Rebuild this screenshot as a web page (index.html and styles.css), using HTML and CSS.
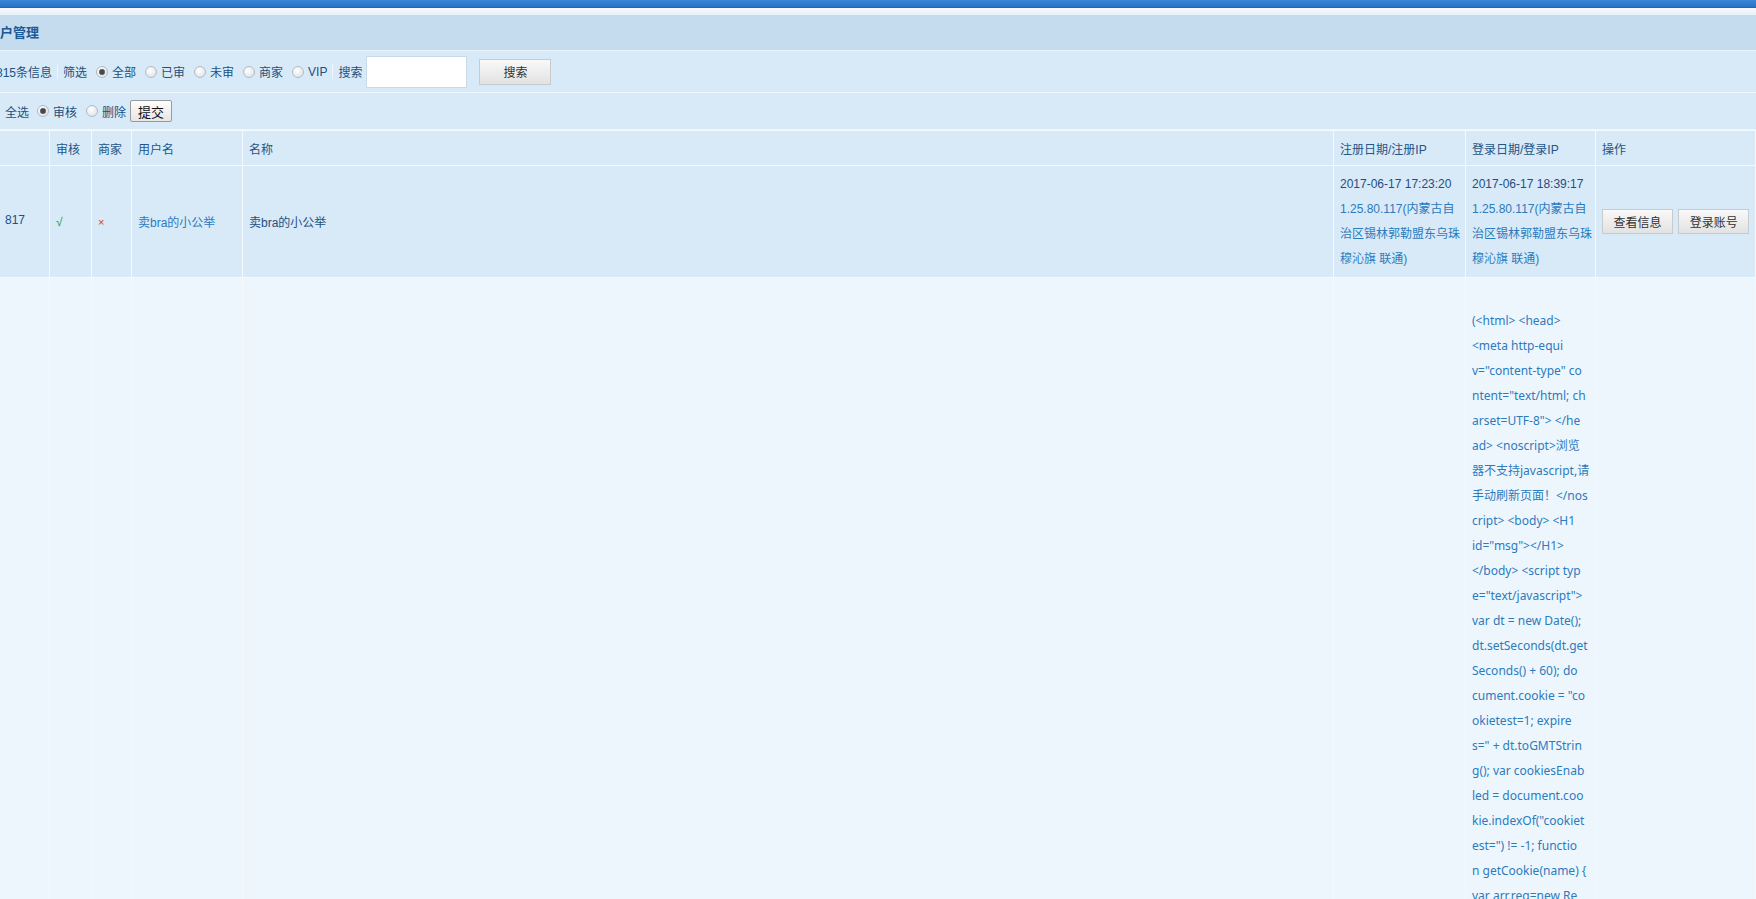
FILE: index.html
```html
<!DOCTYPE html>
<html lang="zh-CN">
<head>
  <meta charset="UTF-8">
  <title>用户管理</title>
  <link rel="stylesheet" href="styles.css">
</head>
<body>
  <div class="topbar"></div>
  <div class="strip"></div>

  <div class="page">
    <div class="title">用户管理</div>

    <div class="bar filter">
      <span>共815条信息</span>
      <span class="sep">筛选</span>
      <label class="opt"><input type="radio" name="f" checked>全部</label>
      <label class="opt"><input type="radio" name="f">已审</label>
      <label class="opt"><input type="radio" name="f">未审</label>
      <label class="opt"><input type="radio" name="f">商家</label>
      <label class="opt"><input type="radio" name="f">VIP</label>
      <span class="sep">搜索</span>
      <input type="text" class="search-box">
      <button class="btn btn-search">搜索</button>
    </div>

    <div class="bar actions">
      <label class="chk"><input type="checkbox">全选</label>
      <label class="opt first"><input type="radio" name="a" checked>审核</label>
      <label class="opt"><input type="radio" name="a">删除</label>
      <button class="btn-submit">提交</button>
    </div>

    <table class="list">
      <colgroup>
        <col style="width: 69px">
        <col style="width: 42px">
        <col style="width: 40px">
        <col style="width: 111px">
        <col>
        <col style="width: 132px">
        <col style="width: 130px">
        <col style="width: 160px">
      </colgroup>
      <thead>
        <tr>
          <th></th>
          <th>审核</th>
          <th>商家</th>
          <th>用户名</th>
          <th>名称</th>
          <th>注册日期/注册IP</th>
          <th>登录日期/登录IP</th>
          <th>操作</th>
        </tr>
      </thead>
      <tbody>
        <tr class="item">
          <td><label class="chk"><input type="checkbox">817</label></td>
          <td><span class="yes">√</span></td>
          <td><span class="no">×</span></td>
          <td><a href="#">卖bra的小公举</a></td>
          <td>卖bra的小公举</td>
          <td class="when">
            <span class="date">2017-06-17 17:23:20</span><br>
            <a href="#">1.25.80.117(内蒙古自<br>治区锡林郭勒盟东乌珠<br>穆沁旗 联通)</a>
          </td>
          <td class="when">
            <span class="date">2017-06-17 18:39:17</span><br>
            <a href="#">1.25.80.117(内蒙古自<br>治区锡林郭勒盟东乌珠<br>穆沁旗 联通)</a>
          </td>
          <td class="ops">
            <button class="btn">查看信息</button>
            <button class="btn">登录账号</button>
          </td>
        </tr>
        <tr class="item raw">
          <td></td>
          <td></td>
          <td></td>
          <td></td>
          <td></td>
          <td></td>
          <td class="dump"><a href="#">(&lt;html&gt; &lt;head&gt;<br>&lt;meta http-equi<br>v="content-type" co<br>ntent="text/html; ch<br>arset=UTF-8"&gt; &lt;/he<br>ad&gt; &lt;noscript&gt;浏览<br>器不支持javascript,请<br>手动刷新页面！&lt;/nos<br>cript&gt; &lt;body&gt; &lt;H1<br>id="msg"&gt;&lt;/H1&gt;<br>&lt;/body&gt; &lt;script typ<br>e="text/javascript"&gt;<br>var dt = new Date();<br>dt.setSeconds(dt.get<br>Seconds() + 60); do<br>cument.cookie = "co<br>okietest=1; expire<br>s=" + dt.toGMTStrin<br>g(); var cookiesEnab<br>led = document.coo<br>kie.indexOf("cookiet<br>est=") != -1; functio<br>n getCookie(name) {<br>var arr,reg=new Re<br>gExp("(^| )" + name<br>+ "=([^;]*)(;|$)");</a></td>
          <td></td>
        </tr>
      </tbody>
    </table>
  </div>
</body>
</html>
```

FILE: styles.css
```css
html, body {
  margin: 0;
  padding: 0;
  height: 100%;
  overflow: hidden;
  background: #eef6fd;
}

body {
  font-family: "Liberation Sans", "Noto Sans CJK SC", sans-serif;
  font-size: 12px;
  color: #22507f;
}

a {
  color: #2b7bbd;
  text-decoration: none;
}

.topbar {
  height: 7px;
  background: linear-gradient(#3a86d8, #2a72c6);
  border-bottom: 1px solid #2565b0;
}

.strip {
  height: 7px;
  background: linear-gradient(#f6fafe, #e6f0f9);
}

/* page is scrolled a little to the right inside the frame */
.page {
  margin-left: -20px;
  width: calc(100% + 20px);
}

.title {
  height: 35px;
  line-height: 35px;
  padding-left: 7px;
  background: #c5dbee;
  border-bottom: 1px solid #e8f2fb;
  color: #1b5997;
  font-size: 13px;
  font-weight: bold;
}

.bar {
  display: flex;
  align-items: center;
  background: #d8eaf7;
  border-bottom: 1px solid #eef6fc;
  white-space: nowrap;
}

.filter {
  height: 41px;
  padding-left: 4px;
}

.actions {
  height: 36px;
  padding-left: 7px;
}

.sep {
  display: inline-flex;
  align-items: center;
  margin-left: 5px;
}

.sep::before {
  content: "";
  width: 1px;
  height: 15px;
  margin-right: 5px;
  background: #eef6fc;
}

.opt {
  display: inline-flex;
  align-items: center;
}

.opt input {
  appearance: none;
  width: 12px;
  height: 12px;
  margin: 0 4px 0 9px;
  border: 1px solid #b0bcc8;
  border-radius: 50%;
  background: radial-gradient(circle at 40% 35%, #ffffff, #d6dde4);
}

.opt input:checked {
  background: radial-gradient(circle, #474747 0 2px, #8c8c8c 3px, transparent 3.5px),
              radial-gradient(circle at 40% 35%, #ffffff, #d6dde4);
}

.actions .first input {
  margin-left: 8px;
}

.chk {
  display: inline-flex;
  align-items: center;
}

.chk input {
  width: 13px;
  height: 13px;
  margin: 0 5px 0 0;
}

.search-box {
  width: 101px;
  height: 32px;
  box-sizing: border-box;
  margin-left: 4px;
  border: 1px solid #c7dbeb;
  background: #fff;
}

.btn {
  height: 26px;
  width: 72px;
  box-sizing: border-box;
  padding: 0;
  border: 1px solid #c8cbce;
  background: linear-gradient(#f9f9f9, #e2e2e2);
  font-family: "Liberation Sans", "Noto Sans CJK SC", sans-serif;
  font-size: 12px;
  color: #333;
}

.btn-search {
  margin-left: 12px;
}

.btn-submit {
  height: 22px;
  width: 42px;
  box-sizing: border-box;
  margin-left: 4px;
  padding: 0;
  border: 1px solid #9a9a9a;
  border-radius: 2px;
  background: linear-gradient(#fdfdfd, #e6e6e6);
  font-family: "Noto Sans CJK SC", sans-serif;
  font-size: 13px;
  color: #111;
}

.list {
  width: 100%;
  table-layout: fixed;
  border-collapse: collapse;
}

.list th,
.list td {
  padding: 0 6px;
  border: 1px solid #f4f9fe;
  text-align: left;
  white-space: nowrap;
  overflow: hidden;
}

.list th {
  height: 34px;
  background: #d8eaf7;
  font-weight: normal;
  color: #245587;
}

.item td {
  height: 111px;
  background: #d8eaf7;
  vertical-align: middle;
}

.when {
  line-height: 25px;
}

.date {
  color: #1e4e85;
}

.yes {
  color: #1f9a2a;
}

.no {
  color: #e0353a;
  font-size: 11px;
}

.ops .btn {
  width: 71px;
  height: 25px;
  margin-right: 2px;
}

.raw td {
  height: auto;
  background: #eef6fd;
  vertical-align: top;
}

.dump {
  padding-top: 30px !important;
  line-height: 25px;
  font-family: "Noto Sans", "Noto Sans CJK SC", sans-serif;
}
```
